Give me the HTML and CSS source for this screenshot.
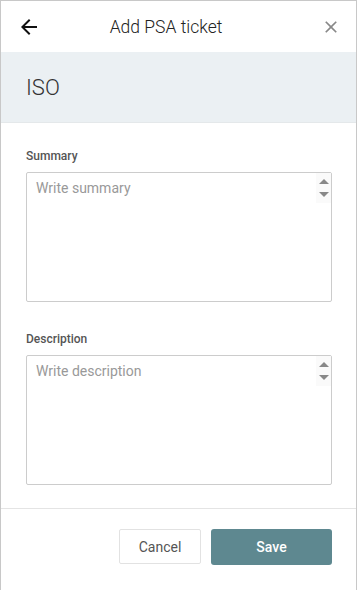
FILE: index.html
```html
<!DOCTYPE html>
<html lang="en">
<head>
  <meta charset="UTF-8">
  <meta name="viewport" content="width=device-width, initial-scale=1.0">
  <title>Add PSA ticket</title>
  <link rel="stylesheet" href="styles.css">
</head>
<body>
  <div class="dialog">
    <div class="header">
      <button class="icon back" aria-label="Back">
        <svg width="24" height="24" viewBox="0 0 24 24"><path d="M20 11H7.83l5.59-5.59L12 4l-8 8 8 8 1.41-1.41L7.83 13H20v-2z" fill="#111"/></svg>
      </button>
      <div class="title">Add PSA ticket</div>
      <button class="icon close" aria-label="Close">
        <svg width="20" height="20" viewBox="0 0 24 24"><path d="M19 6.41L17.59 5 12 10.59 6.41 5 5 6.41 10.59 12 5 17.59 6.41 19 12 13.41 17.59 19 19 17.59 13.41 12z" fill="#888"/></svg>
      </button>
    </div>
    <div class="band">ISO</div>
    <div class="form">
      <label class="field-label" for="summary">Summary</label>
      <div class="area">
        <textarea id="summary" placeholder="Write summary"></textarea>
        <div class="spin"><span class="up"></span><span class="down"></span></div>
      </div>
      <label class="field-label" for="description">Description</label>
      <div class="area">
        <textarea id="description" placeholder="Write description"></textarea>
        <div class="spin"><span class="up"></span><span class="down"></span></div>
      </div>
    </div>
    <div class="footer">
      <button class="btn cancel">Cancel</button>
      <button class="btn save">Save</button>
    </div>
  </div>
</body>
</html>
```

FILE: styles.css
```css
body{
  margin: 0;
  font-family: Roboto, "Liberation Sans", sans-serif;
  background: #fff;
}
.dialog{
  width: 357px;
  height: 590px;
  box-sizing: border-box;
  border: 1px solid #c8c8c8;
  border-bottom: none;
  display: flex;
  flex-direction: column;
}
.header{
  height: 51px;
  display: flex;
  align-items: center;
  padding: 0 15px 0 16px;
}
.icon{
  border: none;
  background: none;
  padding: 0;
  display: flex;
  cursor: pointer;
}
.title{
  flex: 1;
  text-align: center;
  font-size: 17.5px;
  font-weight: 300;
  color: #222;
  padding-right: 30px;
}
.band{
  height: 70px;
  background: #ebf0f3;
  border-bottom: 1px solid #e4e8ea;
  display: flex;
  align-items: center;
  padding-left: 25px;
  font-size: 22px;
  font-weight: 300;
  color: #333;
}
.form{
  padding: 25px 24px 0 25px;
  display: flex;
  flex-direction: column;
}
.field-label{
  font-size: 12px;
  font-weight: 500;
  color: #555;
  line-height: 16px;
  margin-bottom: 8px;
}
.area{
  position: relative;
  margin-bottom: 29px;
}
.area:last-child{
  margin-bottom: 0;
}
textarea{
  display: block;
  width: 100%;
  height: 130px;
  box-sizing: border-box;
  border: 1px solid #ccc;
  border-radius: 2px;
  padding: 6px 30px 6px 9px;
  font-family: inherit;
  font-size: 14px;
  line-height: 19px;
  color: #333;
  resize: none;
  overflow: hidden;
  outline: none;
}
textarea::placeholder{
  color: #999;
}
/* fake scrollbar arrows */
.spin{
  position: absolute;
  top: 1px;
  right: 1px;
  width: 15px;
  height: 30px;
  background: #fafafa;
  display: flex;
  flex-direction: column;
  align-items: center;
  justify-content: center;
  gap: 8px;
}
.spin span{
  width: 0;
  height: 0;
  border-left: 5px solid transparent;
  border-right: 5px solid transparent;
}
.spin .up{
  border-bottom: 5px solid #888;
}
.spin .down{
  border-top: 5px solid #888;
}
.footer{
  margin-top: 23px;
  border-top: 1px solid #e4e4e4;
  display: flex;
  justify-content: flex-end;
  gap: 10px;
  padding: 20px 24px 0 0;
}
.btn{
  font-family: inherit;
  font-size: 14px;
  height: 35px;
  border-radius: 2px;
  cursor: pointer;
}
.cancel{
  width: 82px;
  background: #fff;
  border: 1px solid #e2e2e2;
  color: #555;
}
.save{
  width: 121px;
  height: 36px;
  background: #5e8890;
  border: none;
  color: #fff;
  font-weight: 500;
  border-radius: 3px;
}
```
